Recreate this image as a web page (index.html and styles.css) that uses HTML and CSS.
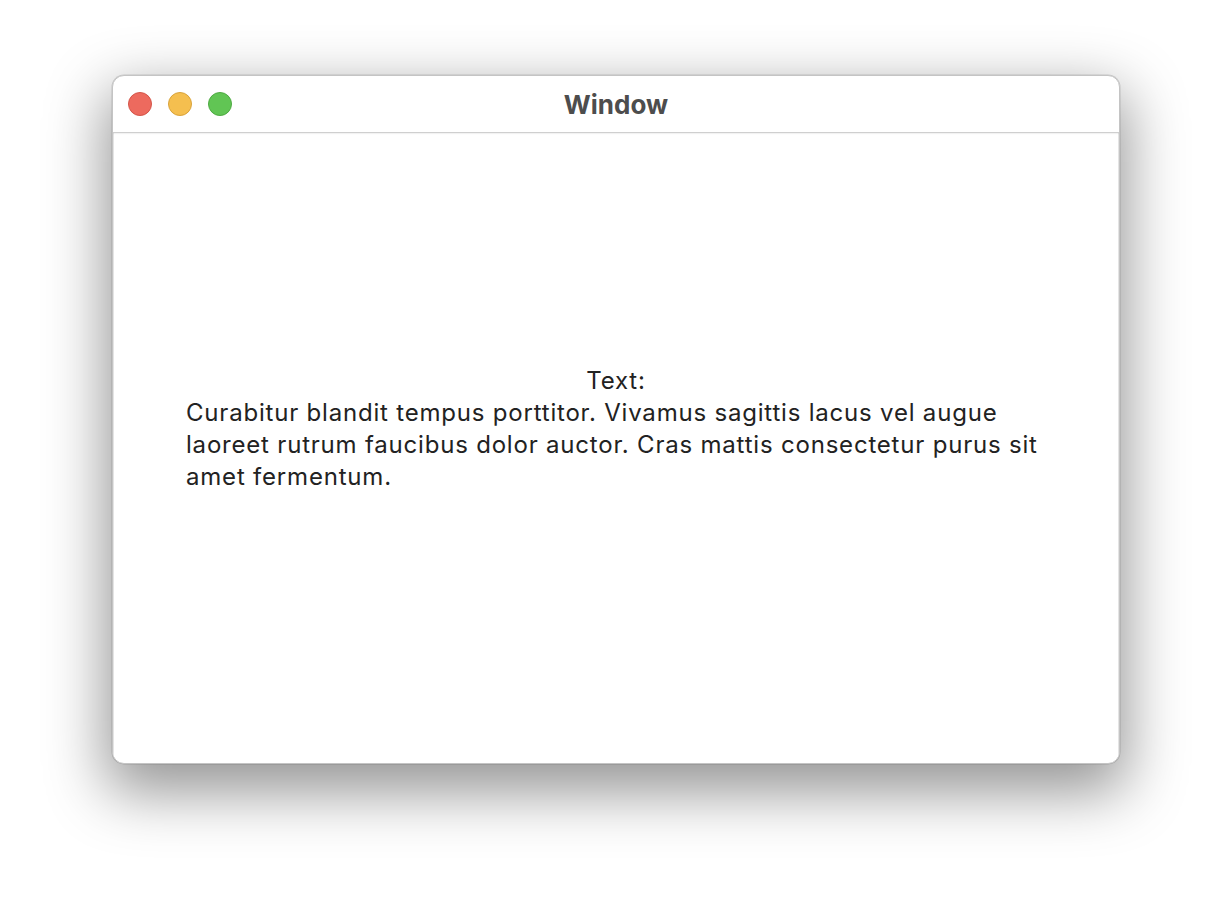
FILE: index.html
```html
<!DOCTYPE html>
<html>
<head>
<meta charset="utf-8">
<link rel="stylesheet" href="styles.css">
</head>
<body>
<div class="stage">
  <div class="window">
    <div class="titlebar">
      <div class="lights">
        <span class="light red"></span>
        <span class="light yellow"></span>
        <span class="light green"></span>
      </div>
      <div class="title">Window</div>
    </div>
    <div class="content">
      <div class="label">Text:</div>
      <p class="para">Curabitur blandit tempus porttitor. Vivamus sagittis lacus vel augue laoreet rutrum faucibus dolor auctor. Cras mattis consectetur purus sit amet fermentum.</p>
    </div>
  </div>
</div>
</body>
</html>
```
FILE: styles.css
```css
html, body {
  margin: 0;
  padding: 0;
  background: #ffffff;
  width: 1232px;
  height: 912px;
  overflow: hidden;
}
.stage {
  padding: 75px 112px 0 112px;
}
.window {
  width: 1008px;
  height: 689px;
  box-sizing: border-box;
  border: 1px solid #c4c4c4;
  border-radius: 12px;
  background: #ffffff;
  box-shadow: 0 22px 60px 6px rgba(0,0,0,0.42), 0 0 0 0.5px rgba(0,0,0,0.15);
  display: flex;
  flex-direction: column;
  overflow: hidden;
}
.titlebar {
  height: 56px;
  flex: 0 0 auto;
  border-bottom: 1px solid #cfcfcf;
  display: flex;
  align-items: center;
  position: relative;
  box-shadow: 0 1px 1px rgba(0,0,0,0.05);
}
.lights {
  display: flex;
  gap: 16px;
  padding-left: 15px;
}
.light {
  width: 24px;
  height: 24px;
  border-radius: 50%;
  box-sizing: border-box;
}
.red { background: #ed6a5e; border: 1px solid #d45549; }
.yellow { background: #f5bf4f; border: 1px solid #d9a33b; }
.green { background: #61c554; border: 1px solid #4eaa42; }
.title {
  position: absolute;
  left: 0;
  right: 0;
  top: 0;
  bottom: 0;
  display: flex;
  align-items: center;
  justify-content: center;
  font-family: Inter, "Noto Sans", sans-serif;
  font-weight: 700;
  font-size: 26px;
  color: #4d4d4d;
  pointer-events: none;
}
.content {
  flex: 1 1 auto;
  display: flex;
  flex-direction: column;
  justify-content: center;
  padding: 0 72px 38px 72px;
  font-family: Inter, "Noto Sans", sans-serif;
  font-size: 24px;
  letter-spacing: 0.8px;
  line-height: 32px;
  color: #222222;
  border-left: 1px solid #e4e4e4;
  border-right: 1px solid #e4e4e4;
}
.label {
  text-align: center;
}
.para {
  margin: 0;
}
```
